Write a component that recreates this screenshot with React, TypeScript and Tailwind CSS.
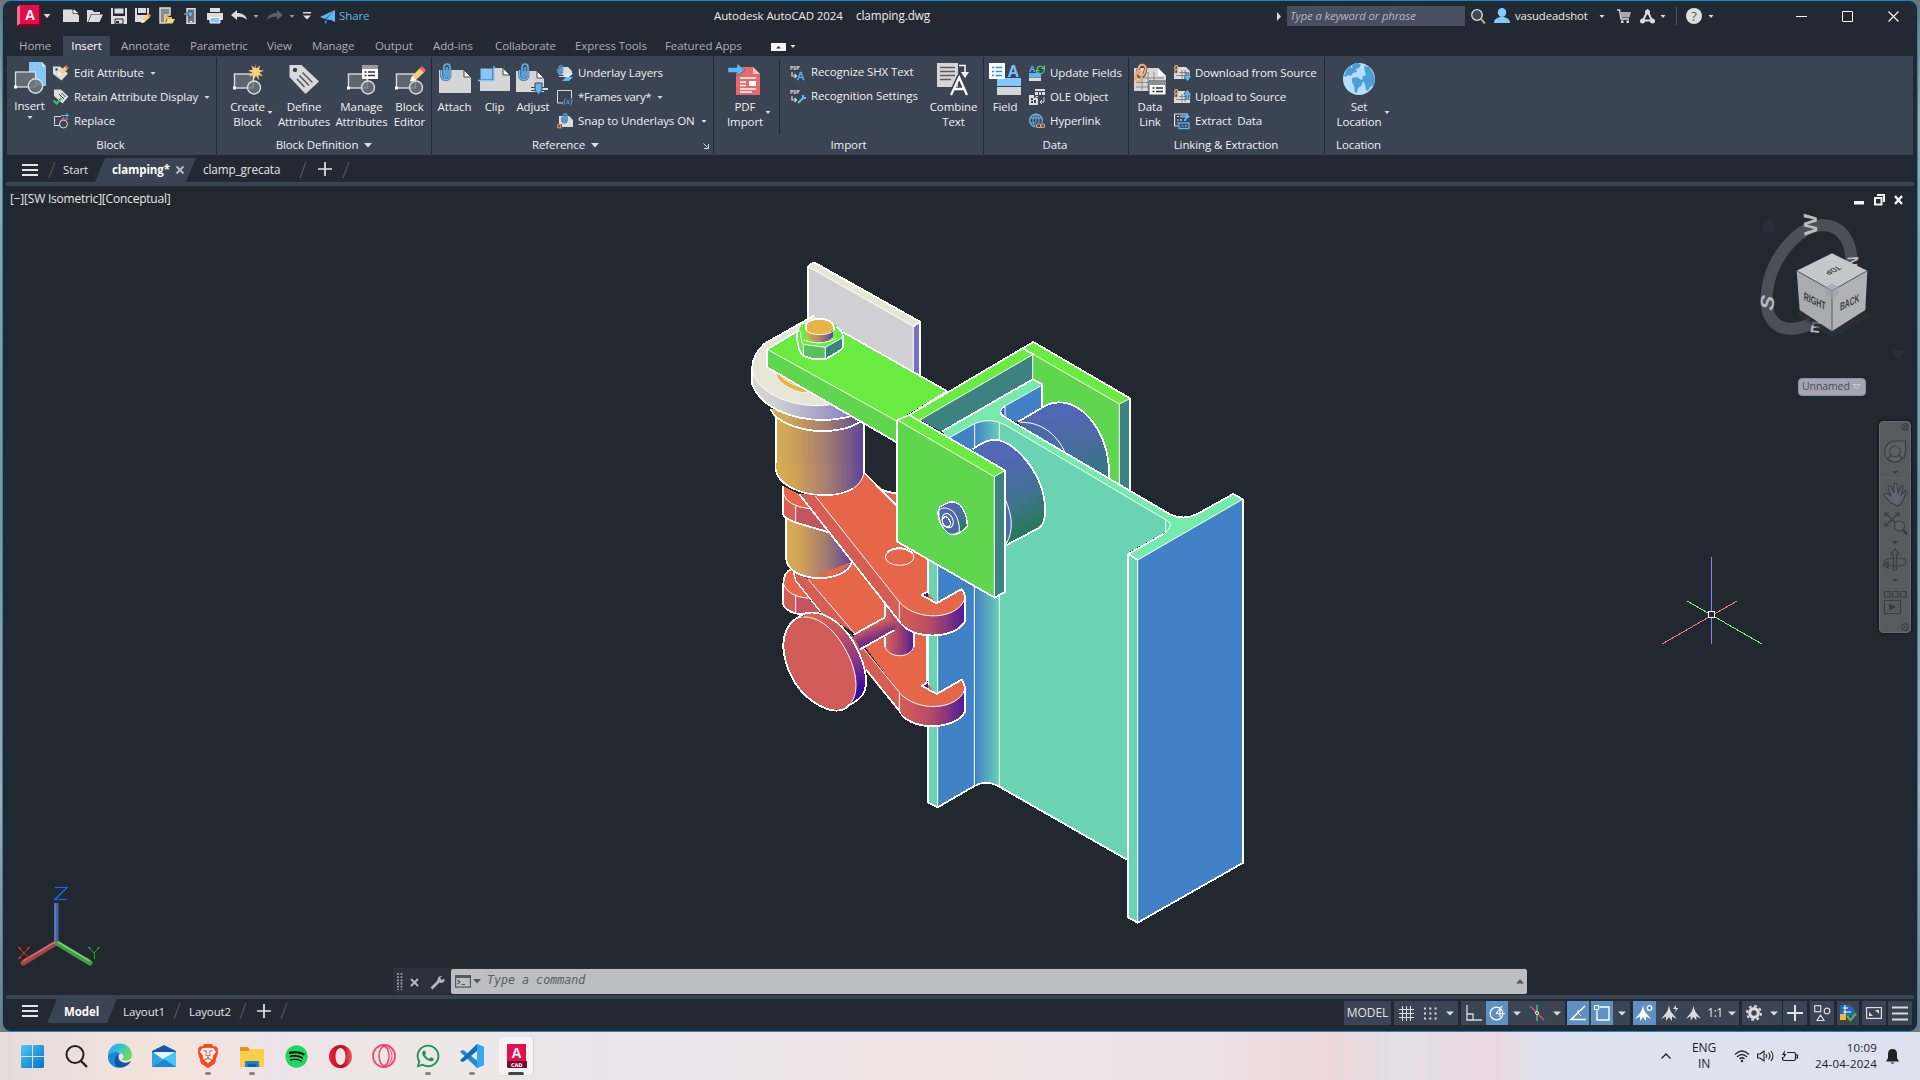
import React from "react";
import { FaSpotify, FaWhatsapp } from "react-icons/fa";
import { SiBrave } from "react-icons/si";

type IconProps = { w: number; h?: number; vb?: string; className?: string; children?: React.ReactNode };

function Ic({ w, h = w, vb, className = "", children }: IconProps) {
  return (
    <svg width={w} height={h} viewBox={vb ?? `0 0 ${w} ${h}`} className={`block shrink-0 overflow-visible ${className}`} fill="none">
      {children}
    </svg>
  );
}

const L = "#dcdcdc";
const B = "#86c8fa";
const B2 = "#5fb8f5";

function Down({ className = "", fill = L }: { className?: string; fill?: string }) {
  return (
    <Ic w={8} h={5} className={className}>
      <path d="M1.500 1h5L4 4z" fill={fill} />
    </Ic>
  );
}

function WideDown() {
  return (
    <Ic w={8} h={5}>
      <path d="M0 .5h8L4 4.500z" fill={L} />
    </Ic>
  );
}

/* ---------- shared icon parts ---------- */

function BlockShape() {
  return (
    <g stroke={L} strokeWidth="1.400">
      <rect x="2.500" y="11" width="19" height="14" fill="#5f6673" />
      <circle cx="22" cy="24.500" r="6.500" fill="#6d7480" fillOpacity=".8" />
      <rect x="1" y="23.500" width="3" height="3" fill="#fff" stroke="none" />
    </g>
  );
}

function Clipper({ x = 0, y = 0, s = 1 }: { x?: number; y?: number; s?: number }) {
  return (
    <g transform={`translate(${x} ${y}) scale(${s})`}>
      <path d="M7 4v9a1.500 1.500 0 0 1-3 0V4a3 3 0 0 1 6 0v9.500a4.500 4.500 0 0 1-8.500 0V7" stroke="#3c6f99" strokeWidth="2.600" />
      <path d="M7 4v9a1.500 1.500 0 0 1-3 0V4a3 3 0 0 1 6 0v9.500a4.500 4.500 0 0 1-8.500 0V7" stroke="#6fbcf5" strokeWidth="1.200" />
    </g>
  );
}

function Pencil({ x, y, s = 1 }: { x: number; y: number; s?: number }) {
  return (
    <g transform={`translate(${x} ${y}) scale(${s})`}>
      <path d="M0 10l1.500-4L7 .5 10 3.500 4.300 9z" fill="#f6cf74" />
      <path d="M7 .5L8.500-1 11.500 2 10 3.500z" fill="#ee6a6a" />
      <path d="M0 10l1.500-4 2.800 3z" fill="#fff" />
    </g>
  );
}

/* ---------- ribbon pieces ---------- */

function Big({ icon, lines, className, arrow }: { icon: React.ReactNode; lines: string[]; className: string; arrow?: boolean }) {
  return (
    <div className={`relative flex shrink-0 flex-col items-center pt-[7px] ${className}`}>
      <div className="h-8 w-8">{icon}</div>
      <div className="mt-1 text-center leading-[15px] whitespace-nowrap">
        {lines.map((l) => (
          <div key={l}>{l}</div>
        ))}
      </div>
      {arrow && <Down className="absolute right-[2px] bottom-[21px]" />}
    </div>
  );
}

function Row({ icon, label, arrow }: { icon: React.ReactNode; label: string; arrow?: boolean }) {
  return (
    <div className="flex h-6 items-center whitespace-nowrap">
      <div className="flex w-[21px] shrink-0">{icon}</div>
      <span className="whitespace-pre">{label}</span>
      {arrow && <Down className="ml-[5px]" />}
    </div>
  );
}

function Panel({ title, className, children, more, launcher }: { title: string; className: string; children: React.ReactNode; more?: boolean; launcher?: boolean }) {
  return (
    <div className={`flex shrink-0 flex-col ${className}`}>
      <div className="flex h-20 shrink-0">{children}</div>
      <div className={`relative flex h-[18px] items-center justify-center whitespace-nowrap ${launcher ? "pr-[16px]" : "pr-[2px]"}`}>
        {title}
        {more && (
          <Ic w={8} h={5} className="ml-[6px]">
            <path d="M0 0h8L4 4.500z" fill={L} />
          </Ic>
        )}
        {launcher && (
          <Ic w={6} className="absolute right-1 bottom-[5px]">
            <path d="M.5.5l4 4M5.500 1v4.500H1" stroke={L} />
          </Ic>
        )}
      </div>
    </div>
  );
}

const Sep = () => <div className="mt-px h-[97px] w-px shrink-0 bg-[#222933]" />;

const blockDefIcons = {
  create: (
    <Ic w={32}>
      <BlockShape />
      <path d="M23 1l1.500 4.500L28 2.500l-1 4.500 5 .5-4.500 2 3.500 3.500-4.500-.8.5 4.800-3-4-3 4 .3-4.800-4.300 1 3.300-3.700-4.300-2 4.700-.7-1.200-4.300 3.800 2.800z" fill="#f7cf78" />
    </Ic>
  ),
  define: (
    <Ic w={32}>
      <path d="M1.500 2h12L31 18.500 17.500 31 1.500 14z" fill="#d9d9d9" />
      <circle cx="7" cy="7" r="2.200" fill="#3b4453" />
      <path d="M11.500 12.500l9.500 10M14.500 9.500l10 10M9 16l7.500 8" stroke="#4b5462" strokeWidth="1.400" />
    </Ic>
  ),
  manage: (
    <Ic w={32}>
      <BlockShape />
      <path d="M16 2h16v14H16z" fill="#fff" />
      <path d="M16 2h16v4H16z" fill="#9b9b9b" />
      <path d="M18.500 9h2m1.500 0h7M18.500 12.500h2m1.500 0h7" stroke="#333" strokeWidth="1.500" />
    </Ic>
  ),
  editor: (
    <Ic w={32}>
      <BlockShape />
      <Pencil x={16} y={4.500} s={1.400} />
    </Ic>
  ),
};

const tag = "M0 1.500h7l8 7-6.500 7L0 9z";

function Ribbon() {
  return (
    <div className="ml-1 flex h-[99px] w-[1906px] bg-[#3b4453] text-[#f0f0f0]">
      <Panel title="Block" className="w-[209px]">
        <div className="flex w-[45px] shrink-0 flex-col items-center pt-[6px]">
          <Ic w={32}>
            <path d="M15 0h13l4 4.500V24H15z" fill="#84c7fa" />
            <path d="M28 0l4 4.500h-4z" fill="#d5ecfd" />
            <rect x="1.500" y="10" width="20" height="15" fill="#656b77" stroke={L} strokeWidth="1.300" />
            <circle cx="21.500" cy="24" r="7.200" fill="#6d7480" fillOpacity=".85" stroke={L} strokeWidth="1.400" />
            <path d="M0 23.500h3v3H0z" fill="#fff" />
          </Ic>
          <span className="mt-1 leading-[15px]">Insert</span>
          <Down className="mt-[2px]" />
        </div>
        <div className="pt-[5px] pl-px">
          <Row
            label="Edit Attribute"
            arrow
            icon={
              <Ic w={16}>
                <path d={tag} fill={L} />
                <circle cx="3.500" cy="4.500" r="1.200" fill="#3b4453" />
                <Pencil x={5} y={1} s={0.950} />
              </Ic>
            }
          />
          <Row
            label="Retain Attribute Display"
            arrow
            icon={
              <Ic w={16}>
                <path d="M1 .5h7l7.500 7-6 7L1 7z" fill={L} />
                <path d="M6 5l5 5M8.500 4l4 4" stroke="#3b4453" />
                <path d="M.5 11.500l3 3L8.500 9" stroke="#3ec06d" strokeWidth="2" />
              </Ic>
            }
          />
          <Row
            label="Replace"
            icon={
              <Ic w={16}>
                <path d="M8 3.500H1.500v8M1 12.500h6" stroke={L} />
                <circle cx="10.500" cy="11" r="4" stroke={L} />
                <path d="M8 2.500h7m-2-2l2.500 2-2.500 2" stroke={B2} />
                <path d="M15.500 6H9m2-2L8.500 6 11 8" stroke="#ee6a6a" />
              </Ic>
            }
          />
        </div>
      </Panel>
      <Sep />
      <Panel title="Block Definition" className="w-[214px] pl-[2px]" more>
        <Big className="w-[57px]" icon={blockDefIcons.create} lines={["Create", "Block"]} arrow />
        <Big className="w-[56px]" icon={blockDefIcons.define} lines={["Define", "Attributes"]} />
        <Big className="w-[59px]" icon={blockDefIcons.manage} lines={["Manage", "Attributes"]} />
        <Big className="w-[37px]" icon={blockDefIcons.editor} lines={["Block", "Editor"]} />
      </Panel>
      <Sep />
      <Panel title="Reference" className="w-[281px] pl-[2px]" more launcher>
        <Big
          className="w-[41px]"
          lines={["Attach"]}
          icon={
            <Ic w={32}>
              <path d="M0 7h25l7 7v16H0z" fill="#d6d6d6" />
              <path d="M25 7l7 7h-7z" fill="#fff" stroke="#3b4453" />
              <Clipper x={1} s={1} />
            </Ic>
          }
        />
        <Big
          className="w-[39px]"
          lines={["Clip"]}
          icon={
            <Ic w={32}>
              <path d="M1 5h23l7 7v16H1z" fill="#d6d6d6" />
              <path d="M24 5l7 7h-7z" fill="#fff" stroke="#3b4453" />
              <path d="M1 5h13v12H1z" fill="#84c7fa" stroke="#3b4453" />
              <path d="M15 3v14.500H-1" stroke="#84c7fa" strokeWidth="1.300" />
            </Ic>
          }
        />
        <Big
          className="w-[38px]"
          lines={["Adjust"]}
          icon={
            <Ic w={32}>
              <path d="M-1 8h21l7 7v14H-1z" fill="#d6d6d6" />
              <path d="M20 8l7 7h-7z" fill="#fff" stroke="#3b4453" />
              <Clipper x={1} s={1} />
              <path d="M14 24h17v4H14z" fill="#3b4453" />
              <path d="M14 26h17" stroke={L} strokeWidth="2" />
              <path d="M18 20h7v7l-3.500 5L18 27z" fill={B2} stroke="#3b4453" />
            </Ic>
          }
        />
        <div className="ml-[5px] pt-[5px]">
          <Row
            label="Underlay Layers"
            icon={
              <Ic w={16}>
                <path d="M4 2h7l4 4v4H2V5z" fill={L} />
                <path d="M2 9h5M2 11.500h5" stroke={L} />
                <path d="M9 8.500h7L12 12H5z" fill="#d8eefe" />
                <path d="M9 12h7l-4 4H5z" fill={B2} />
                <Clipper s={0.550} />
              </Ic>
            }
          />
          <div className="tracking-[-0.35px]">
            <Row
              label="*Frames vary*"
              arrow
              icon={
                <Ic w={16}>
                  <path d="M6 14H.5V1.500h14V9" stroke={L} />
                  <text x="6.500" y="15" fontSize="8" fontStyle="italic" fontFamily="Liberation Serif" letterSpacing="0" fill={B2}>
                    (x)
                  </text>
                </Ic>
              }
            />
          </div>
          <Row
            label="Snap to Underlays ON"
            arrow
            icon={
              <Ic w={16}>
                <path d="M2 3h10l4 4v7H2z" fill={L} />
                <Clipper x={4} s={0.600} />
                <rect x="0" y="11" width="5" height="5" fill="#3b4453" />
                <rect x=".8" y="11.800" width="3" height="3" stroke="#f2a56e" />
              </Ic>
            }
          />
        </div>
      </Panel>
      <Sep />
      <Panel title="Import" className="w-[269px] pl-[2px]">
        <Big
          className="w-[58px]"
          arrow
          lines={["PDF", "Import"]}
          icon={
            <Ic w={32}>
              <path d="M7 4h17l7 7v21H7z" fill="#e36b6c" />
              <path d="M24 4l7 7h-7z" fill="#fbc4c0" />
              <path d="M11 15h16M11 19h6M11 22.500h6M11 26h16M11 29h12" stroke="#fff" strokeWidth="1.300" />
              <path d="M20 18h7v5h-7z" fill="#fff" />
              <path d="M-1 4.500h9V.5l8 6.500-8 6V9.500h-9z" fill={B2} stroke="#3b4453" strokeWidth=".5" />
            </Ic>
          }
        />
        <div className="ml-[5px] mt-1 h-[74px] w-px bg-[#222933]" />
        <div className="ml-[10px] w-[135px] pt-1">
          <Row
            label="Recognize SHX Text"
            icon={
              <Ic w={16}>
                <text x="0" y="5.500" fontSize="5.500" fontFamily="DejaVu Sans Mono" letterSpacing="0" fontWeight="bold" fill={L}>
                  PDF
                </text>
                <path d="M2 8v4h4M4.500 10L6.500 12l-2 2" stroke={L} strokeWidth="1.200" />
                <text x="7" y="16" fontSize="11" fontFamily="Liberation Sans" fill={B2} stroke={B2} strokeWidth=".3">
                  A
                </text>
              </Ic>
            }
          />
          <Row
            label="Recognition Settings"
            icon={
              <Ic w={16}>
                <text x="0" y="5.500" fontSize="5.500" fontFamily="DejaVu Sans Mono" letterSpacing="0" fontWeight="bold" fill={L}>
                  PDF
                </text>
                <path d="M2 8v4h4M4.500 10L6.500 12l-2 2" stroke={L} strokeWidth="1.200" />
                <path d="M8 15l6-6M13 7v3h3" stroke={B2} strokeWidth="2.200" />
              </Ic>
            }
          />
        </div>
        <Big
          className="w-[57px]"
          lines={["Combine", "Text"]}
          icon={
            <Ic w={32}>
              <path d="M-1 0h21v24H-1z" fill="#d6d6d6" />
              <path d="M2 4.500h15M2 8.500h15M2 12.500h15M2 16.500h11" stroke="#5b5b5b" strokeWidth="1.300" />
              <path d="M21 2.500h6v8" stroke="#fff" strokeWidth="1.500" />
              <path d="M23 9h8l-4 6z" fill="#fff" />
              <path d="M12.500 31.500L20.500 14h2.500l7 17.500" stroke="#3b4453" strokeWidth="4" />
              <path d="M13 32L21.200 14.500 29 32M16 26h10.500" stroke="#fff" strokeWidth="2.300" />
            </Ic>
          }
        />
      </Panel>
      <Sep />
      <Panel title="Data" className="w-[144px]">
        <Big
          className="w-[42px]"
          lines={["Field"]}
          icon={
            <Ic w={32}>
              <path d="M8 15h24v8H8z" fill="#84c7fa" />
              <path d="M8 24h24v8H8z" fill="#d6d6d6" />
              <path d="M0 0h16v16H0z" fill="#fff" />
              <path d="M3 4.500h2m1.500 0H13M3 8.500h2m1.500 0H13M3 12.500h2m1.500 0H13" stroke="#2f8fd6" strokeWidth="1.500" />
              <text x="18.500" y="14" fontSize="16" fontWeight="bold" fontFamily="Liberation Sans" fill="#7cc3f8">
                A
              </text>
            </Ic>
          }
        />
        <div className="ml-[3px] pt-[5px]">
          <Row
            label="Update Fields"
            icon={
              <Ic w={16}>
                <text x="0" y="7" fontSize="9" fontWeight="bold" fontFamily="Liberation Sans" fill={B2}>
                  A
                </text>
                <path d="M0 8h12v4H0z" fill={B2} />
                <path d="M0 12.500h12V16H0z" fill={L} />
                <path d="M8 5a3.500 3.500 0 0 1 6.500-2M15 4a3.500 3.500 0 0 1-6.500 2.500M15.500.5v3h-3M7.500 8V5.500h3" stroke="#4bd17e" strokeWidth="1.200" />
              </Ic>
            }
          />
          <Row
            label="OLE Object"
            icon={
              <Ic w={16}>
                <path d="M6 0h10v2H6zM6 3h10v3H6z" fill={L} />
                <path d="M9.500 3v3M12.500 3v3" stroke="#3b4453" />
                <path d="M0 6h5v3h4v7H0z" fill={L} />
                <path d="M2 9h2v2H2zm0 3h2v2H2zm3-1h2v3H5z" fill="#3b4453" />
                <path d="M9 7.500h-2v2M15 8v5h-4m2-2l-2 2 2 2" stroke={L} />
              </Ic>
            }
          />
          <Row
            label="Hyperlink"
            icon={
              <Ic w={16}>
                <circle cx="7" cy="7.500" r="6.300" stroke={B2} strokeWidth="1.300" />
                <ellipse cx="7" cy="7.500" rx="3" ry="6.300" stroke={B2} />
                <path d="M1 5h12M1 10h12M7 1v13" stroke={B2} />
                <rect x="6.500" y="9.500" width="10" height="6.500" fill="#3b4453" />
                <rect x="7.500" y="11" width="4.500" height="3.500" rx="1.500" stroke="#f2a56e" strokeWidth="1.200" />
                <rect x="11.500" y="11" width="4" height="3.500" rx="1.500" stroke="#f2a56e" strokeWidth="1.200" />
              </Ic>
            }
          />
        </div>
      </Panel>
      <Sep />
      <Panel title="Linking & Extraction" className="w-[195px] pl-px">
        <Big
          className="w-[40px]"
          lines={["Data", "Link"]}
          icon={
            <Ic w={32}>
              <path d="M0 5h24l8 8v15H0z" fill="#d6d6d6" />
              <path d="M24 5l8 8h-8z" fill="#fff" />
              <path d="M2 15h28M2 19.500h28M2 24h28M8 12v15M14 9v18M20 9v10" stroke="#8a8a8a" />
              <path d="M15 18h17v14H15z" fill="#fff" stroke="#3b4453" />
              <path d="M16 18h16v4H16z" fill="#8d8d8d" />
              <path d="M18.500 25h2m1.500 0h7M18.500 28.500h2m1.500 0h7" stroke="#333" strokeWidth="1.500" />
              <rect x="4" y="1.500" width="7" height="12" rx="3.500" transform="rotate(15 7 8)" stroke="#5c4a3f" strokeWidth="3.400" />
              <rect x="4" y="1.500" width="7" height="11" rx="3.500" transform="rotate(15 7 8)" stroke="#f2ab7a" strokeWidth="2" />
              <rect x="2" y="8" width="6" height="10" rx="3" transform="rotate(15 5 12)" stroke="#f2ab7a" strokeWidth="2" />
            </Ic>
          }
        />
        <div className="ml-[4px] pt-[5px]">
          {[
            { label: "Download from Source", d: "M13.500 7v7m-2.500-3l2.500 3.500L16 11" },
            { label: "Upload to Source", d: "M13.500 11V3m-2.500 3l2.500-3.500L16 6" },
          ].map((r) => (
            <Row
              key={r.label}
              label={r.label}
              icon={
                <Ic w={16}>
                  <path d="M4 2h8l4 4v8H0V8h4z" fill={L} />
                  <path d="M2 10.500h10M5 7.500h7M8 5v8M11 5v8" stroke="#6d727b" strokeWidth=".8" />
                  <rect x=".8" y=".6" width="2.800" height="4" rx="1.400" stroke="#f2ab7a" strokeWidth="1.200" />
                  <rect x=".8" y="4.500" width="2.800" height="4" rx="1.400" stroke="#f2ab7a" strokeWidth="1.200" />
                  <path d={r.d} stroke="#3b4453" strokeWidth="3.500" />
                  <path d={r.d} stroke={B2} strokeWidth="2" />
                </Ic>
              }
            />
          ))}
          <Row
            label="Extract  Data"
            icon={
              <Ic w={16}>
                <path d="M14 1H.6v12H4M3 3.500h2M3 7h2M3 10h1" stroke={L} strokeWidth="1.200" />
                <path d="M6 3.500h8m-2.500-2.500L14.500 3.500 11.500 6M6 7h2m2 0h2" stroke={B2} strokeWidth="1.800" />
                <rect x="5" y="10" width="10" height="5.500" stroke={B2} strokeWidth="1.300" />
                <path d="M7.500 12.700h1.800m1.500 0h1.800" stroke={B2} strokeWidth="1.600" />
              </Ic>
            }
          />
        </div>
      </Panel>
      <Sep />
      <Panel title="Location" className="w-[69px]">
        <Big
          className="w-[68px]"
          arrow
          lines={["Set", "Location"]}
          icon={
            <Ic w={32}>
              <circle cx="16" cy="16" r="16" fill="#b5dffc" />
              <path d="M4 6c3-4 7-6 11-6l3 2-2 3-3 1 1 3-4 1-2 3-3-1-2 2-2-1zM9 15l5-1 6 4-2 5-3 2-1 5-2-1-1-6-2-4zM21 3l5 1 4 6 2 6-1 6-4 2-2 4-2-1-1-6-3-4 1-4 3-1-1-3z" fill="#4b9fd8" />
              <path d="M18 3l3 2-2 1zM8 3l2 1-2 1z" fill="#d7effe" />
            </Ic>
          }
        />
      </Panel>
    </div>
  );
}

function TitleBar() {
  return (
    <div className="mb-[5px] flex h-[30px] items-center whitespace-nowrap [&>*]:shrink-0">
      <Ic w={24} h={22} className="ml-[14px]">
        <path d="M0 2l3-2v19L0 21z" fill="#f2708f" />
        <path d="M3 0h19v19H3z" fill="#e30f4d" />
        <path d="M22 0l2 3v19H3l-3-1 3-2h19z" fill="#7d0528" />
        <text x="8" y="14.500" fontSize="14" fontWeight="bold" fontFamily="Liberation Sans" fill="#fff">
          A
        </text>
      </Ic>
      <Ic w={8} h={5} className="ml-[2px]">
        <path d="M.5 0h7L4 4z" fill={L} />
      </Ic>
      <Ic w={16} className="ml-3">
        <path d="M0 1.500h9l7 6V14H0z" fill={L} />
        <path d="M10 1.500h1.500L16 5.500H10z" fill="#fff" stroke="#222933" strokeWidth=".7" />
      </Ic>
      <Ic w={16} className="ml-2">
        <path d="M0 14V2h5l2 2h6v2H4L1 14z" fill={L} />
        <path d="M4.500 6.500H16L12.500 14H1.500z" fill={L} />
      </Ic>
      <Ic w={16} className="ml-2">
        <path d="M0 0h2v8h12V0h2v16H0z" fill={L} />
        <path d="M3 0h10v6H3zM4 11h8v5H4z" fill={L} stroke="#222933" />
        <path d="M5 13h3v2H5z" fill="#222933" />
      </Ic>
      <Ic w={16} className="ml-2">
        <path d="M0 0h2v7h10V0h2v8l-7 6H0z" fill={L} />
        <path d="M3 0h8v5H3z" fill={L} />
        <Pencil x={6} y={6} s={0.900} />
      </Ic>
      <Ic w={16} className="ml-2">
        <path d="M1 0h10v7H6v8H1z" fill="#8b8b8b" stroke={L} strokeWidth="1.500" />
        <path d="M6 15V8h3l1 1h3v2H8l-2 4z" fill="#e5b65f" />
        <path d="M8.500 11H16l-2.500 4.500H6.500z" fill="#f7d48a" />
      </Ic>
      <Ic w={16} className="ml-2">
        <path d="M4 .7h8v14.600H4z" fill="#6f7379" stroke={L} strokeWidth="1.500" />
        <path d="M7 13.500h2" stroke="#fff" />
        <path d="M1 5h5V2l4.500 4.200L6 10V7H1z" fill={B2} stroke="#222933" strokeWidth=".5" />
      </Ic>
      <Ic w={16} className="ml-2">
        <path d="M3 0h10v4H3zM0 5h16v7H0z" fill={L} />
        <path d="M3 9.500h10V15H3z" fill={B} stroke="#fff" />
      </Ic>
      <Ic w={16} className="ml-2">
        <path d="M0 7l6-5v3c5 0 9 2 10 7-3-3-6-3.500-10-3V12z" fill={L} />
      </Ic>
      <Down className="ml-[5px]" fill="#a8a8a8" />
      <Ic w={16} className="ml-[7px]">
        <path d="M16 7l-6-5v3c-5 0-9 2-10 7 3-3 6-3.500 10-3V12z" fill="#5b6068" />
      </Ic>
      <Down className="ml-[5px]" fill="#8c8f94" />
      <Ic w={8} h={8} className="ml-[7px]">
        <path d="M0 0h8v1.500H0zM0 3.500h8L4 7.500z" fill={L} />
      </Ic>
      <Ic w={15} className="ml-[9px]">
        <path d="M0 8L15 1 5 10zM5.500 10.500L15 1v12l-4-2zM5 11l2 2-1.500 2z" fill={B2} />
      </Ic>
      <span className="ml-[4px] w-[30px] text-[#5bb5f2]">Share</span>
      <span className="ml-[345px] w-[142px] text-[#ececec]">Autodesk AutoCAD 2024</span>
      <span className="w-[76px] text-[11.700px] text-[#ececec]">clamping.dwg</span>
      <Ic w={8} h={9} className="ml-[343px]">
        <path d="M2 0l4 4.500L2 9z" fill={L} />
      </Ic>
      <div className="ml-1 flex h-5 w-[178px] items-center bg-[#464e60] pl-[3px] text-[11.300px] text-[#b3b7bf] italic">Type a keyword or phrase</div>
      <Ic w={15} className="ml-[6px]">
        <circle cx="6" cy="6" r="5.300" fill="#3f4856" stroke={L} strokeWidth="1.300" />
        <path d="M10 10l4 4.500" stroke="#c99e62" strokeWidth="2" />
      </Ic>
      <Ic w={16} className="ml-2">
        <ellipse cx="8" cy="4.500" rx="4.200" ry="4.500" fill={B} />
        <path d="M0 15c0-4 3-5 6-6h4c3 1 6 2 6 6z" fill={B} />
      </Ic>
      <span className="ml-[5px] w-[75px] text-[11.300px] text-[#ececec]">vasudeadshot</span>
      <Down className="ml-2" />
      <Ic w={14} className="ml-[11px]">
        <path d="M0 1h2.500L4 10h8" stroke={L} strokeWidth="1.400" />
        <path d="M3 3h11l-1.500 5.500H4z" fill="#aaa" />
        <path d="M4 11.500h2.500V14H4zM9.500 11.500H12V14H9.500z" fill={L} />
      </Ic>
      <Ic w={15} className="ml-[9px]">
        <path d="M7.500 2L3 11.500h9z" stroke={L} strokeWidth="2" />
        <circle cx="7.500" cy="3" r="2.500" fill={L} />
        <circle cx="2.500" cy="12" r="2.500" fill={L} />
        <circle cx="12.500" cy="12" r="2.500" fill={L} />
      </Ic>
      <Down className="ml-1" />
      <div className="ml-[9px] h-[18px] w-px bg-[#4a566b]" />
      <div className="ml-[9px] flex h-4 w-4 items-center justify-center rounded-full bg-[#dedede] text-[13px] leading-none text-[#555b66]">?</div>
      <Down className="ml-[5px]" />
      <div className="ml-[81px] h-px w-[11px] bg-white" />
      <div className="ml-[35px] h-[11px] w-[11px] rounded-[1px] border border-white" />
      <Ic w={11} className="ml-[35px]">
        <path d="M.5.5l10 10M10.500.5l-10 10" stroke="#fff" strokeWidth="1.100" />
      </Ic>
    </div>
  );
}

function RibbonTabs() {
  return (
    <div className="flex h-5 items-center whitespace-nowrap text-[#a9adb4] [&>span]:shrink-0">
      <span className="ml-4 w-[44px]">Home</span>
      <span className="flex h-5 w-[47px] items-center justify-center bg-[#3b4453] text-white">Insert</span>
      <span className="ml-[11px] w-[69px]">Annotate</span>
      <span className="w-[77px]">Parametric</span>
      <span className="w-[45px]">View</span>
      <span className="w-[63px]">Manage</span>
      <span className="w-[58px]">Output</span>
      <span className="w-[62px]">Add-ins</span>
      <span className="w-[80px]">Collaborate</span>
      <span className="w-[90px]">Express Tools</span>
      <span className="w-[106px]">Featured Apps</span>
      <Ic w={15} h={8} className="mt-px">
        <path d="M0 0h15v8H0z" fill="#f4f4f4" />
        <path d="M5 5.500h5L7.500 3z" fill="#333" />
      </Ic>
      <Down className="mt-px ml-[3px]" />
    </div>
  );
}

const Slash = ({ className }: { className: string }) => (
  <Ic w={8} h={16} className={className}>
    <path d="M7 0L1 16" stroke="#4b5462" strokeWidth="1.300" />
  </Ic>
);

const Burger = ({ className, w = 16 }: { className: string; w?: number }) => (
  <Ic w={w} h={12} vb="0 0 16 12" className={className}>
    <path d="M0 1h16M0 6h16M0 11h16" stroke="#e4e4e4" strokeWidth="1.800" />
  </Ic>
);

const Plus = ({ className, s = 14 }: { className: string; s?: number }) => (
  <Ic w={s} vb="0 0 14 14" className={className}>
    <path d="M7 0v14M0 7h14" stroke="#e4e4e4" strokeWidth="1.700" />
  </Ic>
);

function FileTabs() {
  return (
    <div className="flex h-[27px] items-center whitespace-nowrap text-[#e4e4e4] [&>*]:shrink-0">
      <Burger className="mt-[2px] ml-[19px]" />
      <Slash className="mt-[2px] ml-[10px]" />
      <span className="ml-[7px] w-[32px] pt-[2px]">Start</span>
      <div className="mt-[3px] flex h-6 w-[101px] items-center bg-[#3b4453] pl-[17px] [clip-path:polygon(10px_0,101px_0,91px_100%,0_100%)]">
        <span className="w-[64px] font-bold text-white">clamping*</span>
        <Ic w={8}>
          <path d="M.5.5l7 7M7.500.5l-7 7" stroke="#b9bcc2" strokeWidth="1.800" />
        </Ic>
      </div>
      <span className="ml-[7px] w-[96px] pt-[2px] text-[11.700px]">clamp_grecata</span>
      <Slash className="mt-[2px]" />
      <Plus className="mt-px ml-[11px]" />
      <Slash className="mt-[2px] ml-[10px]" />
    </div>
  );
}

/* ---------- 3D model ---------- */

/* Each local frame is scaled so that three units make one pixel. */
function Frame({ x, y, children }: { x: number; y: number; children: React.ReactNode }) {
  return (
    <g transform={`translate(${x} ${y}) scale(.33333)`} strokeLinejoin="round">
      {children}
    </g>
  );
}

const TH = { stroke: "#fff", strokeWidth: 5.500 };
const TN = { stroke: "#fff", strokeWidth: 3 };

function Gradient({ id, stops, x2 = 1, y2 = 0 }: { id: string; stops: [number, string][]; x2?: number; y2?: number }) {
  return (
    <linearGradient id={id} x1="0" y1="0" x2={x2} y2={y2}>
      {stops.map(([o, c]) => (
        <stop key={o} offset={o} stopColor={c} />
      ))}
    </linearGradient>
  );
}

function Hook({ dy, id }: { dy: number; id: string }) {
  return (
    <g transform={`translate(0 ${dy})`}>
      <path d="M478 426C530 485 650 480 674 418V485C650 532 530 545 486 494L478 475z" fill={`url(#${id})`} />
      <path d="M674 418V485C650 532 530 545 484 492" {...TH} />
      <path d="M478 426V478" {...TN} />
      <path d="M478 426C530 485 650 480 674 418" {...TN} />
      <path d="M563 392l-18 13 18 6z" fill="#4a1590" />
      <path d="M563 395L545 405 590 430 665 387Q678 405 674 425" {...TH} />
    </g>
  );
}

function Model() {
  return (
    <g shapeRendering="crispEdges">
      <defs>
        <Gradient id="gold" stops={[[0, "#d8ad52"], [0.200, "#d2a556"], [0.600, "#a57b70"], [0.850, "#775a88"], [1, "#5a42a0"]]} />
        <Gradient id="ring" stops={[[0, "#d8d7d6"], [0.300, "#cccbd0"], [1, "#8681c4"]]} />
        <Gradient id="hook" stops={[[0, "#d75e55"], [0.450, "#b84d66"], [0.700, "#8b387a"], [1, "#4f1a98"]]} />
        <Gradient id="post" stops={[[0, "#dc6252"], [0.500, "#a54370"], [1, "#4f1a98"]]} />
        <Gradient id="fillet" stops={[[0, "#4182c6"], [0.550, "#59acc0"], [1, "#6ad4b2"]]} />
        <Gradient id="wheel" x2={0.300} y2={1} stops={[[0, "#5468b8"], [0.350, "#5067b0"], [0.700, "#3f7390"], [1, "#28795a"]]} />
        <Gradient id="wheelBack" x2={0.300} y2={1} stops={[[0, "#5468b8"], [0.350, "#5067b0"], [0.750, "#476d9c"], [1, "#3a7288"]]} />
        <Gradient id="rod" x2={0.500} y2={1} stops={[[0, "#e6664a"], [0.400, "#d25c5c"], [0.650, "#8a387c"], [1, "#4a1590"]]} />
        <Gradient id="rim" x2={0.300} y2={1} stops={[[0, "#e6664a"], [0.350, "#c4535f"], [0.700, "#873684"], [1, "#3d0ba0"]]} />
        <Gradient id="tip" stops={[[0, "#e3b048"], [0.500, "#b0846a"], [1, "#5a42a0"]]} />
      </defs>

      {/* back plate, washer and sleeve */}
      <Frame x={740} y={250}>
        <path d="M205 48L520 229V374L205 210z" fill="#d0cfd3" />
        <path d="M205 48L222 37 540 215 520 229z" fill="#e5e6d6" />
        <path d="M520 229L540 217V380L520 370z" fill="#7372c4" />
        <path d="M205 50L520 229V372" {...TN} />
        <path d="M205 205V48L222 37 540 215V380M520 229L540 217" {...TH} />
        <path d="M90 478Q100 500 107 505V655Q110 680 145 705C200 745 290 745 340 715Q370 695 372 670V500L325 480z" fill="url(#gold)" />
        <path d="M92 478C110 520 190 545 255 543S345 525 368 512" {...TH} />
        <path d="M107 502V655Q110 680 130 697C190 745 290 745 340 715M372 515V672" {...TH} />
        <path d="M340 715Q365 698 372 670" {...TN} />
        <path d="M36 340V400C60 470 150 510 250 510Q290 510 335 498V340z" fill="url(#ring)" />
        <path d="M222 197L75 280C45 300 35 335 38 362C50 425 140 465 225 467L275 464 340 300z" fill="#e5e6d6" />
        <path d="M222 197L75 280C45 305 36 330 36 360V400C60 470 150 510 250 510Q290 510 335 498" {...TH} />
        <path d="M38 362C50 425 140 465 225 467Q260 467 275 463" {...TN} />
        <path d="M107 365Q110 395 150 415T205 425L240 436 107 362z" fill="#e6b545" />
        <path d="M107 370Q110 395 150 415T205 425M118 372Q140 400 185 412" stroke="#fff" strokeWidth="2.500" />
      </Frame>

      {/* rear bracket and beam */}
      <Frame x={880} y={330}>
        <path d="M458 72L718 222V470L458 330z" fill="#60d54e" />
        <path d="M428 55L460 36 752 205 718 222z" fill="#6aeb42" />
        <path d="M718 222L752 205V485L718 465z" fill="#3c8280" />
        <path d="M458 72L718 222V465M718 222L752 205" {...TN} />
        <path d="M88 255L428 55 460 72 120 270z" fill="#6aeb42" />
        <path d="M120 270L458 74V148L185 305z" fill="#3c8280" />
        <path d="M120 270L458 74V148" {...TN} />
        <path d="M88 255L460 36 750 205V485M428 55L460 73" {...TH} />
        <path d="M375 228L487 165V237L415 278 375 262z" fill="#4182c6" />
        <path d="M375 228Q360 236 362 252L375 262z" fill="#2f62b4" />
        <path d="M415 275L500 225C520 215 550 215 570 222C640 250 692 340 687 443L555 370z" fill="url(#wheelBack)" />
        <path d="M415 277C480 272 530 310 555 370L420 285z" fill="#4c6aa8" />
        <path d="M415 275L500 225C520 215 550 215 570 222C640 250 692 340 687 443" {...TH} />
        <path d="M420 277C480 275 530 310 555 368M375 228V262" {...TN} />
        <path d="M358 268L855 560Q885 590 855 606L745 668V1650L358 1370z" fill="#6ad4b2" />
        <path d="M284 270H360V1375H284z" fill="url(#fillet)" />
        <path d="M172 335L284 270V1370L172 1432z" fill="#4182c6" />
        <path
          d="M185 305L458 148 487 163 375 228Q355 240 365 255L410 283 870 553Q910 572 950 553L1060 492 1088 508 773 690 745 672 850 612Q872 597 871 583Q868 572 855 568L375 284Q330 262 285 280L205 325z"
          fill="#75eaab"
        />
      </Frame>
      <Frame x={900} y={560}>
        <path d="M84 0L113 16V742L84 727z" fill="#6ad4b2" />
        <path d="M222 679Q258 657 298 680L683 900V1100H200z" fill="#212830" />
        <path d="M683 -18L713 0V1088L683 1072z" fill="#6ad4b2" />
        <path d="M713 0L1030 -182V908L713 1088z" fill="#4182c6" />
        <path d="M713 0V1088M113 10V742M223 40V678M298 0V680" {...TN} />
        <path d="M84 0V727L113 742 223 678Q258 658 298 680L683 900M683 -18V1072L713 1088 1030 908V-182" {...TH} />
      </Frame>
      <Frame x={880} y={330}>
        <path d="M185 305L458 148 487 163V235M375 228Q355 240 365 255L410 283 870 553Q910 572 950 553L1060 492 1088 508M773 690L745 672 850 612" {...TH} />
        <path d="M487 165L375 228M1088 508L773 690M850 612Q872 597 871 583Q868 575 855 568L375 284Q330 262 285 280L205 325M284 282V360M358 278V335M857 568V608" {...TN} />
        <path d="M278 358Q310 335 330 331C360 325 390 340 420 370C470 420 500 490 495 555Q492 585 475 595L380 645 372 420z" fill="url(#wheel)" />
        <path d="M376 505Q412 580 380 640z" fill="#4c6aa8" />
        <path d="M278 358Q310 335 330 331C360 325 390 340 420 370C470 420 500 490 495 555Q492 585 475 595L380 645" {...TH} />
        <path d="M376 508C398 560 400 600 380 640" {...TN} />
      </Frame>

      {/* clamp arms */}
      <Frame x={740} y={460}>
        <path d="M138 170V295C145 372 320 372 336 305L270 218z" fill="url(#gold)" />
        <path d="M130 372C126 345 145 328 160 325L210 420 240 456 165 460Q135 450 130 435z" fill="#c4545f" />
        <path d="M130 372C126 345 145 328 160 325L205 415Q145 410 130 372z" fill="#e6664a" />
        <path d="M130 372Q138 395 167 405V460Q135 450 130 435z" fill="#d55d57" />
        <path d="M158 325Q130 335 130 372V435Q135 450 165 460L190 463" {...TH} />
        <path d="M130 372Q145 410 205 415M167 405V460" {...TN} />

        <path d="M205 355L336 305 435 425 563 530V672L590 703 662 660Q680 675 674 690C650 752 530 757 478 697L345 522z" fill="#e6664a" />
        <path d="M160 325L167 362 242 456 345 520 205 358z" fill="#d55d54" />
        <path d="M158 325L167 362 242 456" {...TH} strokeWidth={4} />
        <path d="M205 358L345 522" {...TN} />
        <path d="M138 170V295C145 360 300 378 336 305Q300 350 240 355" fill="url(#gold)" />
        <path d="M138 170V295C145 372 320 372 336 305" {...TH} />

        <path d="M330 520L368 560 478 697 488 768 370 625z" fill="#d55d54" />
        <path d="M368 562L478 697M563 530V672" {...TN} />
        <path d="M378 628L490 768M562 527V670" {...TH} />
        <Hook dy={272} id="hook" />

        <path d="M435 425V565C445 595 512 595 521 565V480z" fill="url(#post)" />
        <path d="M435 425V470M522 515V560M435 532V560" {...TH} />
        <path d="M435 560C445 596 512 596 521 560" {...TN} />
        <path d="M340 525L445 470Q472 480 466 510L360 568z" fill="url(#rod)" />
        <path d="M340 525L435 472M360 568L464 510" {...TH} />

        <path d="M190 462C240 445 300 480 340 545C370 600 385 650 375 690Q370 712 318 742L200 500z" fill="url(#rim)" />
        <path d="M165 480C190 462 250 480 295 535C350 610 360 690 335 730C310 765 250 755 200 710C140 655 115 560 140 510Q150 488 165 480z" fill="#d05b57" />
        <path d="M180 472C225 465 265 495 295 535C350 610 360 690 335 725" {...TN} />
        <path d="M165 478L190 462C240 445 300 480 340 545C370 600 385 650 375 690Q368 715 325 737C300 765 250 752 200 710C140 655 115 560 140 510Q150 488 165 478z" {...TH} />

        <path d="M130 85L210 135 270 218 165 187Q140 178 130 165z" fill="#c4545f" />
        <path d="M130 85Q140 125 167 135V187Q140 178 130 165z" fill="#d86055" />
        <path d="M130 78L180 103 212 148Q140 144 130 100z" fill="#e6664a" />
        <path d="M130 78V165Q140 178 165 187L270 218" {...TH} />
        <path d="M130 100Q140 138 208 146M167 135V187" {...TN} />

        <path d="M180 105L240 105Q340 100 373 38L430 90 470 100V245L563 300V398L590 430 665 387Q680 405 674 425C650 480 530 485 478 426L225 107z" fill="#e6664a" />
        <path d="M178 103H225L478 426 482 490z" fill="#d55d54" />
        <path d="M225 107L478 426" {...TN} />
        <path d="M178 103L484 492M373 38L470 138M425 88Q440 97 470 100M563 300V398" {...TH} />
        <Hook dy={0} id="hook" />
        <ellipse cx="479" cy="291" rx="43" ry="25" {...TN} />
        <path d="M440 278Q479 250 518 280" {...TH} />
      </Frame>
      <Frame x={740} y={250}>
        <path d="M107 655Q110 680 130 697C190 745 290 745 340 715Q370 698 372 660V640H107z" fill="url(#gold)" />
        <path d="M107 635V655Q110 680 130 697C190 745 290 745 340 715M372 635V672" {...TH} strokeWidth={4.500} />
        <path d="M340 715Q365 698 372 670" {...TN} />

        {/* horizontal arm and nut */}
        <path d="M82 298L240 205 310 245 620 423 470 513z" fill="#6aeb42" />
        <path d="M82 298L470 513V577L82 352z" fill="#60d54e" />
        <path d="M82 298L470 513" {...TN} />
        <path d="M470 577L82 352V298L170 245M310 247L620 423" {...TH} />
        <path d="M170 250L185 225 240 210 290 225 310 262V295L260 326H215L188 318Q170 290 170 250z" fill="#6aeb42" />
        <path d="M190 285L256 292V326H215L190 318z" fill="#59c25c" />
        <path d="M256 292L308 262V295L262 325H256z" fill="#3c8280" />
        <path d="M182 245Q182 275 190 283L256 292 306 264M190 283V318M256 292V326M190 270Q240 290 290 265" {...TN} />
        <path d="M178 240Q166 245 172 270Q176 305 190 318L215 326H260L300 302 310 292V262Q305 240 290 230" {...TH} />
        <path d="M198 232V255Q205 275 240 276Q272 275 280 258V232z" fill="url(#tip)" />
        <ellipse cx="240" cy="231" rx="42" ry="23" fill="#e6b545" />
        <path d="M198 240V225Q205 207 240 207T282 230V242" {...TH} />
        <path d="M198 240Q210 254 240 254T282 240" {...TN} />
      </Frame>

      {/* front plate and bolt */}
      <Frame x={880} y={330}>
        <path d="M88 255L200 184" {...TH} />
        <path d="M52 270L88 255 375 422 343 440z" fill="#6aeb42" />
        <path d="M52 270L343 440 344 803 52 635z" fill="#60d54e" />
        <path d="M343 440L375 422V785L344 803z" fill="#3c8280" />
        <path d="M52 270L343 440V800M343 440L375 422" {...TN} />
        <path d="M88 255L52 270V635L344 803 376 785V422L88 255" {...TH} />
        <path d="M180 530L205 517Q225 512 240 525Q262 550 262 590L240 608Q220 618 205 610Q172 580 174 545z" fill="url(#wheel)" stroke="#fff" strokeWidth="4" />
        <path d="M177 540Q195 525 220 545Q240 570 238 605Q220 618 205 610Q172 580 177 540z" fill="#4c6aa8" stroke="#fff" strokeWidth="3" />
        <ellipse cx="203" cy="572" rx="16" ry="22" transform="rotate(-20 203 572)" fill="#4c6aa8" stroke="#fff" strokeWidth="3" />
        <ellipse cx="199" cy="576" rx="11" ry="16" transform="rotate(-20 199 576)" stroke="#fff" strokeWidth="4" />
      </Frame>
    </g>
  );
}

function ViewCube() {
  return (
    <Frame x={1640} y={200}>
      <path d="M365 78L388 53 409 78 404 96H370z" fill="#292f38" />
      <path d="M758 450H792V460L775 476 758 460z" fill="#292f38" />
      <path d="M635 185C632 115 600 75 545 75C475 80 395 170 382 270C370 350 405 395 470 385Q495 380 515 370" stroke="#4b5058" strokeWidth="36" />
      <g fontFamily="Liberation Sans" fontWeight="bold" fill="#b9babd" letterSpacing="0">
        <text fontSize="56" transform="translate(532 106) rotate(-92) scale(1.250 1)">
          W
        </text>
        <text fontSize="58" transform="translate(398 336) rotate(-82) skewX(-14) scale(1.100 1)">
          S
        </text>
        <text fontSize="46" transform="translate(650 200) rotate(-80) skewX(14)">
          N
        </text>
        <text fontSize="46" transform="translate(508 396) rotate(4) skewX(-8)">
          E
        </text>
      </g>
      <path d="M480 330L576 395 676 335 690 350 576 415 470 345z" fill="#2c323a" opacity=".6" />
      <path d="M470 212L576 160 682 212 576 272z" fill="#c6c7c9" />
      <path d="M470 212L576 272V394L479 330z" fill="#a9abad" />
      <path d="M682 212L576 272V394L676 330z" fill="#b1b2b4" />
      <path d="M470 212L576 272 682 212M576 272V394" stroke="#55595f" strokeWidth="3" />
      <path d="M556 262L576 250 596 262V285L576 296 556 285z" fill="#9aa0aa" opacity=".6" />
      <g fontFamily="Liberation Sans" fontWeight="bold" fill="#3d4249" letterSpacing="0">
        <text fontSize="28" textLength="66" lengthAdjust="spacingAndGlyphs" transform="matrix(1 .48 0 1.200 491 299)">
          RIGHT
        </text>
        <text fontSize="28" textLength="58" lengthAdjust="spacingAndGlyphs" transform="matrix(1 -.5 0 1.200 600 333)">
          BACK
        </text>
        <text fontSize="26" textLength="46" lengthAdjust="spacingAndGlyphs" transform="matrix(-.87 .42 -.8 -.5 592 197)">
          TOP
        </text>
      </g>
    </Frame>
  );
}

function Cursor() {
  return (
    <g shapeRendering="crispEdges">
      <path d="M1711.500 557v87" stroke="#8a80f0" />
      <path d="M1687 601l75 43" stroke="#84f284" />
      <path d="M1737 601l-75 43" stroke="#f07c7c" />
      <rect x="1708.500" y="611.500" width="6" height="6" fill="#212830" stroke="#fff" />
    </g>
  );
}

function Ucs() {
  return (
    <g>
      <path d="M56.500 903v41" stroke="#3f66ad" strokeWidth="4" />
      <path d="M55 903v40" stroke="#6f9ada" strokeWidth="1" />
      <path d="M56 943L23 963" stroke="#a84444" strokeWidth="5" strokeLinecap="round" />
      <path d="M55 942L23 961" stroke="#c87070" strokeWidth="1.500" />
      <path d="M57 943L90 963" stroke="#459a45" strokeWidth="5" strokeLinecap="round" />
      <path d="M58 942L90 961" stroke="#76cf70" strokeWidth="1.800" />
      <g shapeRendering="crispEdges">
        <path d="M55 887.500h12L55 899.500h12" stroke="#1666f0" />
        <path d="M18.500 947l11 12M29.500 947l-11 12" stroke="#f02a2a" />
        <path d="M88.500 947l5.500 6v6M99.500 947l-5.500 6" stroke="#1fa81f" />
      </g>
    </g>
  );
}

function NavBar() {
  const c = "#383d45";
  return (
    <div className="absolute top-[235px] left-[1876px] flex h-[212px] w-8 flex-col items-center rounded-[4px] border border-[#676b6e] bg-[#565b5e] shadow-[0_0_2px_1px_#14181d]">
      <Ic w={32} h={210} className="-mx-px">
        <g stroke={c} strokeWidth="1.100">
          <circle cx="26" cy="5" r="3.200" />
          <path d="M24.500 3.500l3 3m0-3l-3 3" />
          <path d="M16 19H26.500V30A10.500 10.500 0 1 1 16 19z" fill="#5c6168" />
          <circle cx="16" cy="29.500" r="5.500" />
          <path d="M12 33.500l-3 3M20 33.500l3 3" />
          <path d="M12 81L5 73q1-3 4-1l3 2-3-9q1-2 3 0l3 6V62q2-2 3 0l1 9 3-7q2-1 2 1l-2 8 4-4q2 0 1 2l-4 9-4 4z" fill="#5f6470" />
          <path d="M6 91l14 13M20 91L6 104M6 91h4M6 91v4M20 91h-4M20 91v4M6 104h4M6 104v-4" />
          <circle cx="20.500" cy="104" r="5" fill="#5c6168" />
          <path d="M24 108l4 4" strokeWidth="2.600" />
          <path d="M16 127l-4 5h2.500v16h3V132H20z" />
          <path d="M14 136q-9 1-9 4t11 4q11 0 11-4t-9-4M9 140v6l-5-3z" />
          <path d="M5.500 169.500h5.500v5.500H5.500zM13.500 169.500H19V175h-5.500zM21.500 169.500H27V175h-5.500zM5.500 178.500h16v13h-16z" />
          <circle cx="26" cy="205" r="3.200" />
          <path d="M24.500 205h3" />
        </g>
        <path d="M13 49h6l-3 3zM13 119h6l-3 3zM13 157h6l-3 3zM10 181l7 4-7 4z" fill={c} />
        <path d="M3 56h26M3 164h26" stroke="#63676b" />
      </Ic>
    </div>
  );
}

function CommandLine() {
  return (
    <div className="absolute top-[782px] left-[390px] flex h-[26px] w-[1134px] items-center bg-[#2b303d] [&>*]:shrink-0">
      <Ic w={6} h={17} className="ml-1">
        <path d="M1 0v17M4.500 0v17" stroke="#9b9fa8" strokeWidth="1.800" strokeDasharray="1.800 1.400" />
      </Ic>
      <Ic w={9} h={9} className="mt-[2px] ml-[7px]">
        <path d="M1 1l7 7M8 1L1 8" stroke="#b4b6ba" strokeWidth="2" />
      </Ic>
      <Ic w={15} className="mt-[2px] ml-[11px]">
        <path d="M1.500 13.500L9 6" stroke="#b4b6ba" strokeWidth="2.800" />
        <path d="M12 1L10 3l2 2 2.500-1.500Q15 8 10.500 8L7.500 6Q7 1 12 1z" fill="#b4b6ba" />
      </Ic>
      <div className="ml-[6px] flex h-[25px] w-[1076px] items-center rounded-[2px] bg-[#bdbebf]">
        <Ic w={16} h={13} className="ml-1">
          <rect x=".6" y=".6" width="14.800" height="11.500" stroke="#55585c" strokeWidth="1.200" />
          <path d="M0 0h16v3H0z" fill="#55585c" />
          <path d="M2.500 5l2.500 2-2.500 2M6.500 9.500h3.500" stroke="#55585c" strokeWidth="1.100" />
        </Ic>
        <Ic w={8} h={5} className="ml-[2px]">
          <path d="M0 0h8L4 4.500z" fill="#55585c" />
        </Ic>
        <span className="ml-[6px] flex-1 font-['DejaVu_Sans_Mono',monospace] text-[11.7px] tracking-[-0.02px] text-[#5a5d62] italic">Type a command</span>
        <Ic w={8} h={5} className="mr-[3px]">
          <path d="M0 4.500h8L4 0z" fill="#55585c" />
        </Ic>
      </div>
    </div>
  );
}

function Canvas() {
  return (
    <div className="relative h-[809px] bg-[#212830]">
      <svg width="1914" height="809" viewBox="3 186 1914 809" fill="none" className="block">
        <Model />
        <ViewCube />
        <Cursor />
        <Ucs />
      </svg>
      <div className="absolute top-[5px] left-[7px] text-[12px] leading-4 tracking-[-0.210px] whitespace-nowrap text-[#e6e6e6]">[−][SW Isometric][Conceptual]</div>
      <div className="absolute top-[8px] left-[1851px] flex items-center">
        <Ic w={10} h={12}>
          <path d="M0 7h10v3.500H0z" fill="#f2f2f2" />
        </Ic>
        <Ic w={11} h={12} className="ml-[10px]">
          <path d="M3 0h8v8H9V2H3z" fill="#f2f2f2" />
          <rect x="1" y="4" width="6.500" height="6.500" stroke="#f2f2f2" strokeWidth="2" />
        </Ic>
        <Ic w={9} h={10} className="ml-[9px]">
          <path d="M1 1l7 8M8 1L1 9" stroke="#f2f2f2" strokeWidth="2.400" />
        </Ic>
      </div>
      <div className="absolute top-[192px] left-[1795px] flex h-[18px] w-[68px] items-center rounded-[4px] border border-[#8e909f] bg-[#a3a5b4] pl-[3px] text-[10.5px] tracking-[-0.1px] text-[#4a4d55]">
        Unnamed
        <Ic w={9} h={6} className="mr-1 ml-auto">
          <path d="M1 .5h7L4.500 5z" stroke="#c9cbd4" />
        </Ic>
      </div>
      <NavBar />
      <CommandLine />
    </div>
  );
}

/* ---------- status bar ---------- */

function Cell({ className, children }: { className: string; children?: React.ReactNode }) {
  return <div className={`flex h-6 shrink-0 items-center justify-center ${className}`}>{children}</div>;
}

const annot = "M8 0q1 6 3 8l5 6-5-2.500V16L8 12l-3 4v-4.500L0 14l5-6Q7 6 8 0z";

function StatusBar() {
  return (
    <div className="flex h-8 items-center whitespace-nowrap text-[#e4e4e4] [&>*]:shrink-0">
      <Burger className="-mt-[8px] ml-[19px]" />
      <div className="-mt-2 ml-[9px] flex h-6 w-[70px] items-center bg-[#3b4453] pt-[2px] pl-[17px] font-bold text-white [clip-path:polygon(10px_0,70px_0,60px_100%,0_100%)]">Model</div>
      <span className="-mt-[6px] ml-[6px] w-[50px]">Layout1</span>
      <Slash className="-mt-[8px]" />
      <span className="-mt-[6px] ml-2 w-[50px]">Layout2</span>
      <Slash className="-mt-[8px]" />
      <Plus className="-mt-[8px] ml-[10px]" />
      <Slash className="-mt-[8px] ml-[9px]" />

      <div className="-mt-[4px] ml-[1056px] flex [&>*]:shrink-0">
        <Cell className="w-[47px] bg-[#3b4453] text-[12px]">MODEL</Cell>
        <div className="ml-[3px] flex w-[64px] bg-[#3b4453]">
          <Cell className="w-6">
            <Ic w={15}>
              <path d="M3.500 0v15M7.500 0v15M11.500 0v15M0 3.500h15M0 7.500h15M0 11.500h15" stroke={L} />
            </Ic>
          </Cell>
          <Cell className="w-6">
            <Ic w={13}>
              <path d="M0 1.500h13M0 6.500h13M0 11.500h13" stroke={L} strokeWidth="2" strokeDasharray="2 3.300" />
            </Ic>
          </Cell>
          <Cell className="w-4">
            <WideDown />
          </Cell>
        </div>
        <div className="ml-[3px] flex w-[104px] bg-[#3b4453]">
          <Cell className="w-[25px]">
            <Ic w={16}>
              <path d="M1 0v15h15M1 9h6v6" stroke={L} strokeWidth="1.300" />
            </Ic>
          </Cell>
          <Cell className="w-[22px] bg-[#5f90c4]">
            <Ic w={16}>
              <circle cx="7.500" cy="8.500" r="6.300" stroke="#fff" strokeWidth="1.200" />
              <path d="M7 8.500h9M7 8.500L13 1M11 4v8" stroke="#fff" strokeWidth="1.200" />
            </Ic>
          </Cell>
          <Cell className="w-[18px]">
            <WideDown />
          </Cell>
          <Cell className="w-[22px]">
            <Ic w={16}>
              <path d="M1 1l14 14" stroke="#d65c62" strokeWidth="1.300" />
              <path d="M8 0v16" stroke="#4bd17e" strokeWidth="1.300" />
              <circle cx="8" cy="8" r="1.500" fill="#333" stroke="#fff" />
            </Ic>
          </Cell>
          <Cell className="w-[17px]">
            <WideDown />
          </Cell>
        </div>
        <div className="ml-[2px] flex w-[63px] gap-[2px] bg-[#3b4453]">
          <Cell className="w-[22px] bg-[#5f90c4]">
            <Ic w={16}>
              <path d="M15 1L1 14.500h15" stroke="#fff" strokeWidth="1.400" />
              <path d="M8 5v3m0 0l3 3" stroke="#fff" />
            </Ic>
          </Cell>
          <Cell className="w-[22px] bg-[#5f90c4]">
            <Ic w={16}>
              <path d="M3 5.500V15h12V2H5.500" stroke="#fff" strokeWidth="1.400" />
              <rect x=".6" y=".6" width="4" height="4" stroke="#fff" />
            </Ic>
          </Cell>
          <Cell className="w-[14px]">
            <WideDown />
          </Cell>
        </div>
        <div className="ml-[3px] flex w-[106px] bg-[#3b4453]">
          <Cell className="w-[23px] bg-[#5f90c4]">
            <Ic w={17} h={16}>
              <path d={annot} transform="translate(-1 0)" fill="#fff" />
              <circle cx="13.500" cy="3" r="2.300" stroke="#fff" strokeWidth="1.200" />
            </Ic>
          </Cell>
          <Cell className="ml-[3px] w-[22px]">
            <Ic w={17} h={16}>
              <path d={annot} transform="translate(-1 0)" fill={L} />
              <path d="M14 0l-3 4h3l-2 4 4.500-5H14z" fill={L} />
            </Ic>
          </Cell>
          <Cell className="ml-[1px] w-[23px]">
            <Ic w={15} h={16} vb="0 0 16 16">
              <path d={annot} fill={L} />
            </Ic>
          </Cell>
          <Cell className="w-5 text-[12px] tracking-[-0.5px]">1:1</Cell>
          <Cell className="w-[14px]">
            <WideDown />
          </Cell>
        </div>
        <div className="ml-[3px] flex w-[40px] bg-[#3b4453]">
          <Cell className="w-[23px]">
            <Ic w={16}>
              <circle cx="8" cy="8" r="4.300" stroke={L} strokeWidth="3.200" />
              <circle cx="8" cy="8" r="7" stroke={L} strokeWidth="2" strokeDasharray="2.800 2.700" />
            </Ic>
          </Cell>
          <Cell className="w-[17px]">
            <WideDown />
          </Cell>
        </div>
        <Cell className="ml-[1px] w-6 bg-[#3b4453]">
          <Plus className="" s={16} />
        </Cell>
        <Cell className="ml-[3px] w-6 bg-[#3b4453]">
          <Ic w={17} h={16}>
            <rect x=".7" y=".7" width="6" height="6" stroke={L} strokeWidth="1.200" />
            <circle cx="13" cy="6" r="2.800" stroke={L} strokeWidth="1.200" />
            <path d="M6.500 10l3.500 5.500H3z" stroke={L} strokeWidth="1.200" />
          </Ic>
        </Cell>
        <Cell className="ml-[3px] w-[22px] bg-[#3b4453]">
          <Ic w={16}>
            <path d="M0 0h10l5 5v6H0z" fill="#2468ae" />
            <path d="M3 3h5m-5 4h8M5 0v9" stroke="#fff" />
            <path d="M0 9h6v6H0z" fill="#f2b934" />
            <path d="M7 11l3.500 4L16 8.500" stroke="#4caf50" strokeWidth="2.600" />
          </Ic>
        </Cell>
        <Cell className="ml-[3px] w-6 bg-[#3b4453]">
          <Ic w={16} h={12}>
            <rect x=".6" y=".6" width="14.800" height="10.800" stroke={L} strokeWidth="1.200" />
            <path d="M9 3h4v4zM7 9H3V5z" fill={L} />
          </Ic>
        </Cell>
        <Cell className="ml-[2px] w-6 bg-[#3b4453]">
          <Ic w={16} h={15}>
            <path d="M0 1.500h16M0 7.500h16M0 13.500h16" stroke={L} strokeWidth="1.800" />
          </Ic>
        </Cell>
      </div>
    </div>
  );
}

/* ---------- taskbar ---------- */

function TaskIcon({ children, dot, active }: { children: React.ReactNode; dot?: boolean; active?: boolean }) {
  return (
    <div className={`relative flex h-[38px] w-[34px] items-center justify-center rounded-[4px] ${active ? "bg-[#f7f4f5] shadow-[1px_0_1px_#d9d4d6]" : ""}`}>
      {children}
      {dot && <div className="absolute bottom-0 left-[14px] h-[3px] w-[6px] rounded-full bg-[#8a8586]" />}
      {active && <div className="absolute bottom-0 left-[9px] h-[3px] w-4 rounded-full bg-[#3f4446]" />}
    </div>
  );
}

function Taskbar() {
  return (
    <div className="flex h-12 items-center bg-[linear-gradient(90deg,#e5dcda_0px,#ebdfdb_60px,#f5e3dc_180px,#ece3e8_280px,#eee8e4_420px,#eae4ea_600px,#f0e4e6_900px,#ece2e6_1200px,#ecd6da_1330px,#e3e1e6_1400px,#ecd7e0_1490px,#dfe2ee_1540px,#dbe2ee_1920px)] text-[#1d1d1f] [&>*]:shrink-0">
      <div className="ml-[15px] flex gap-[10px]">
        <TaskIcon>
          <Ic w={23}>
            <defs>
              <linearGradient id="win" x1="0" y1="0" x2="1" y2="1">
                <stop offset="0" stopColor="#4fc8f8" />
                <stop offset="1" stopColor="#0670c8" />
              </linearGradient>
            </defs>
            <path d="M1 0h10v11H0V1zM12 0h10l1 1v10H12zM0 12h11v11H1l-1-1zM12 12h11v10l-1 1H12z" fill="url(#win)" />
          </Ic>
        </TaskIcon>
        <TaskIcon>
          <Ic w={23}>
            <ellipse cx="10" cy="9.500" rx="8.500" ry="8.500" stroke="#222" strokeWidth="2" />
            <path d="M16 16l6 6" stroke="#222" strokeWidth="2.400" />
          </Ic>
        </TaskIcon>
        <TaskIcon>
          <Ic w={24}>
            <defs>
              <linearGradient id="edge1" x1="0" y1="0" x2="1" y2=".4">
                <stop offset="0" stopColor="#2aa4dd" />
                <stop offset=".5" stopColor="#35c1d8" />
                <stop offset="1" stopColor="#67dc5c" />
              </linearGradient>
            </defs>
            <path d="M0 12a12 12 0 0 0 16 11q5-2 7-6-5 3-9 1-5-3-3-8Q2 4 0 12z" fill="#0f56a6" />
            <path d="M0 12q0 10 10 12-5-5-3-10 2-4 6-4-6-6-13 2z" fill="#1c86d8" />
            <path d="M0 12A12 12 0 0 1 24 11q0 5-6 5.500-4 0-4-1 2-1 1.500-3.500Q14 8 9 8 3 8 0 12z" fill="url(#edge1)" />
          </Ic>
        </TaskIcon>
        <TaskIcon>
          <Ic w={24} h={23}>
            <path d="M0 6L12 0l12 6v6H0z" fill="#0f5ba9" />
            <path d="M2 7h20v8H2z" fill="#e9f2fa" />
            <path d="M0 6.500L12 15 24 6.500V22H0z" fill="#2fa5e4" />
            <path d="M0 22L14 12l10-5.500V22z" fill="#45c5f6" />
            <path d="M12 14l12 8H0z" fill="#1d86d3" />
          </Ic>
        </TaskIcon>
        <TaskIcon dot>
          <div className="flex rounded-full bg-[radial-gradient(circle,#fff_0,#fff_55%,transparent_56%)]">
            <SiBrave size={24} color="#fb4a1e" />
          </div>
        </TaskIcon>
        <TaskIcon dot>
          <Ic w={24} h={21}>
            <path d="M0 1h8l2 3h12v4H0z" fill="#dd9a12" />
            <path d="M0 5h9l2-2h13v18H0z" fill="#fbce47" />
            <path d="M5 21v-5q0-1 1-1h12q1 0 1 1v5z" fill="#1b7fd0" />
            <path d="M8 18h8v3H8z" fill="#0d5ea8" />
          </Ic>
        </TaskIcon>
        <TaskIcon>
          <div className="flex rounded-full bg-[radial-gradient(circle,#000_0,#000_60%,transparent_61%)]">
            <FaSpotify size={23} color="#1ed760" />
          </div>
        </TaskIcon>
        <TaskIcon>
          <Ic w={23}>
            <defs>
              <linearGradient id="opera" x1="0" y1="0" x2="1" y2="0">
                <stop offset="0" stopColor="#ee1c30" />
                <stop offset=".6" stopColor="#b80e1e" />
                <stop offset="1" stopColor="#f55a5f" />
              </linearGradient>
            </defs>
            <path fillRule="evenodd" d="M11.500 0a11.500 11.500 0 1 0 0 23 11.500 11.500 0 1 0 0-23zM11.500 3c3 0 5 4 5 8.500s-2 8.500-5 8.500-5-4-5-8.500 2-8.500 5-8.500z" fill="url(#opera)" />
          </Ic>
        </TaskIcon>
        <TaskIcon>
          <Ic w={24}>
            <circle cx="12" cy="12" r="11" stroke="#f0476b" strokeWidth="1.800" />
            <ellipse cx="12" cy="12" rx="5" ry="9.500" stroke="#f0476b" strokeWidth="1.500" />
            <path d="M14 2q6 3 6 10t-6 10" stroke="#f0476b" />
          </Ic>
        </TaskIcon>
        <TaskIcon dot>
          <FaWhatsapp size={26} color="#1b9557" />
        </TaskIcon>
        <TaskIcon dot>
          <Ic w={24}>
            <path d="M17 0l7 3v18l-7 3L3 10.500 0 8l2-2 2 .5 13 10V7z" fill="#1e8bd4" />
            <path d="M17 7L4 17.500 2 18l-2-2 3-2.500L17 0z" fill="#0f6fb8" />
            <path d="M17 0l7 3v18l-7 3z" fill="#35a9f0" />
          </Ic>
        </TaskIcon>
        <TaskIcon active>
          <Ic w={21} h={24}>
            <path d="M1 0h19v17H1z" fill="#e5104e" />
            <path d="M1 17h20v7H2l-1-1z" fill="#7a0a2c" />
            <text x="5.500" y="14" fontSize="14" fontWeight="bold" fontFamily="Liberation Sans" fill="#fff">
              A
            </text>
            <text x="5" y="22.500" fontSize="5" fontWeight="bold" fontFamily="DejaVu Sans" fill="#fff">
              CAD
            </text>
          </Ic>
        </TaskIcon>
      </div>
      <Ic w={10} h={6} className="ml-[1128px]">
        <path d="M.5 5.500L5 1l4.500 4.500" stroke="#222" strokeWidth="1.300" />
      </Ic>
      <div className="ml-[17px] w-[32px] text-center text-[12px] leading-4">
        <div>ENG</div>
        <div>IN</div>
      </div>
      <Ic w={16} h={12} className="ml-[14px]">
        <path d="M1 4.500q7-7 14 0M3 7q5-5 10 0M5.500 9q2.500-2.500 5 0" stroke="#222" strokeWidth="1.200" />
        <circle cx="8" cy="11" r="1.200" fill="#222" />
      </Ic>
      <Ic w={17} h={12} className="ml-[7px]">
        <path d="M.6 4h2.500L7 1v10L3 8H.6zM9 4q1.500 2 0 4M11.500 2.500q3 3.500 0 7M14 1q4 5 0 10" stroke="#222" strokeWidth="1.100" />
      </Ic>
      <Ic w={17} h={12} className="ml-[7px]">
        <path d="M6 2.500h7q1.500 0 1.500 1.500v5q0 1.500-1.500 1.500H3q-1.500 0-1.500-1.500V7M15 5h1.500v3H15" stroke="#222" strokeWidth="1.200" />
        <path d="M4 0L1 5h2l-1 4 3.500-5h-2z" fill="#222" />
      </Ic>
      <div className="ml-[12px] w-[67px] text-right text-[11.500px] leading-4 tracking-[0.200px] whitespace-nowrap">
        <div>10:09</div>
        <div>24-04-2024</div>
      </div>
      <Ic w={13} h={15} className="ml-[9px]">
        <path d="M6.500 0q4.500 0 4.500 5v4l2 3.500H0L2 9V5q0-5 4.500-5zM4.500 13.500h4q-2 2.500-4 0z" fill="#222" />
      </Ic>
    </div>
  );
}

export default function App() {
  return (
    <div className="h-[1080px] w-[1920px] overflow-hidden bg-[linear-gradient(180deg,#6f7573_0px,#9fa8a6_120px,#8b8f92_500px,#a9a9a8_800px,#77797c_1031px)] font-['Open_Sans','Noto_Sans',sans-serif] text-[11.5px] tracking-[-0.1px]">
      <div className="ml-[2px] h-[1032px] w-[1916px] overflow-hidden rounded-[9px] border border-[#128bc9] bg-[#222933]">
        <TitleBar />
        <RibbonTabs />
        <Ribbon />
        <FileTabs />
        <div className="mx-[3px] h-1 bg-[#3b4453]" />
        <Canvas />
        <div className="mx-[3px] h-1 bg-[#3b4453]" />
        <StatusBar />
      </div>
      <Taskbar />
    </div>
  );
}
